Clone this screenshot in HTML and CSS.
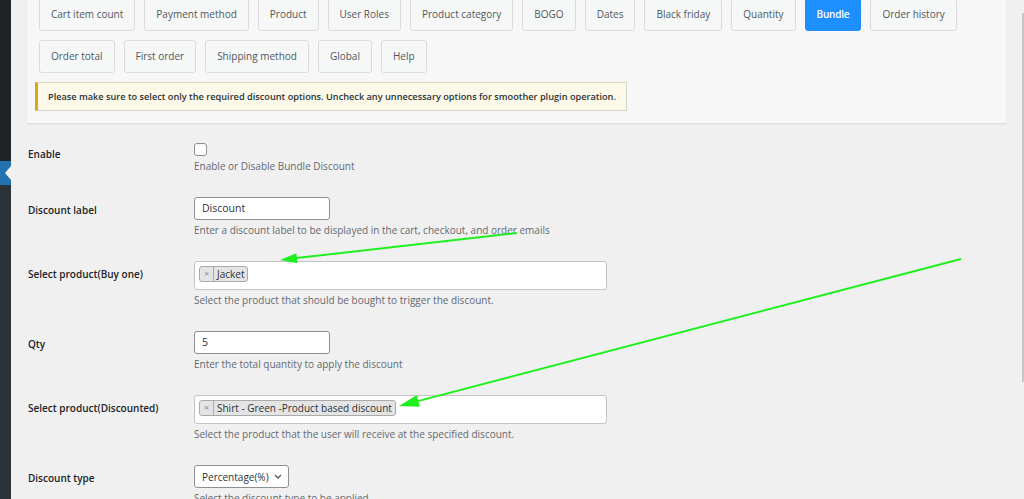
FILE: index.html
```html
<!DOCTYPE html>
<html lang="en">
<head>
  <meta charset="UTF-8">
  <meta name="viewport" content="width=device-width, initial-scale=1.0">
  <title>Bundle Discount</title>
  <link rel="stylesheet" href="styles.css">
</head>
<body>

<div class="layout">
  <aside class="adminmenu">
    <div class="menu-top"></div>
    <div class="menu-current"></div>
    <div class="menu-sub"></div>
  </aside>

  <main class="wrap">
    <div class="panel">
      <nav class="tabs">
        <a class="tab">Cart item count</a>
        <a class="tab">Payment method</a>
        <a class="tab">Product</a>
        <a class="tab">User Roles</a>
        <a class="tab">Product category</a>
        <a class="tab">BOGO</a>
        <a class="tab">Dates</a>
        <a class="tab">Black friday</a>
        <a class="tab">Quantity</a>
        <a class="tab active">Bundle</a>
        <a class="tab">Order history</a>
        <a class="tab">Order total</a>
        <a class="tab">First order</a>
        <a class="tab">Shipping method</a>
        <a class="tab">Global</a>
        <a class="tab">Help</a>
      </nav>
      <div class="notice">Please make sure to select only the required discount options. Uncheck any unnecessary options for smoother plugin operation.</div>
    </div>

    <div class="form-table">
      <div class="row">
        <label class="row-label">Enable</label>
        <div class="field">
          <span class="checkbox"></span>
          <p class="description">Enable or Disable Bundle Discount</p>
        </div>
      </div>

      <div class="row">
        <label class="row-label">Discount label</label>
        <div class="field">
          <div class="input short">Discount</div>
          <p class="description">Enter a discount label to be displayed in the cart, checkout, and order emails</p>
        </div>
      </div>

      <div class="row">
        <label class="row-label">Select product(Buy one)</label>
        <div class="field">
          <div class="multi">
            <span class="choice"><span class="choice-remove">×</span>Jacket</span>
          </div>
          <p class="description">Select the product that should be bought to trigger the discount.</p>
        </div>
      </div>

      <div class="row">
        <label class="row-label">Qty</label>
        <div class="field">
          <div class="input short">5</div>
          <p class="description">Enter the total quantity to apply the discount</p>
        </div>
      </div>

      <div class="row">
        <label class="row-label">Select product(Discounted)</label>
        <div class="field">
          <div class="multi">
            <span class="choice"><span class="choice-remove">×</span>Shirt - Green -Product based discount</span>
          </div>
          <p class="description">Select the product that the user will receive at the specified discount.</p>
        </div>
      </div>

      <div class="row">
        <label class="row-label">Discount type</label>
        <div class="field">
          <div class="select">Percentage(%)
            <svg class="chevron" width="8" height="5" viewBox="0 0 8 5"><path d="M1 1l3 3 3-3" fill="none" stroke="#50575e" stroke-width="1.3"/></svg>
          </div>
          <p class="description">Select the discount type to be applied</p>
        </div>
      </div>
    </div>
  </main>

  <div class="scrollbar"><div class="thumb"></div></div>

  <svg class="arrows" width="1024" height="499" viewBox="0 0 1024 499">
    <line x1="517" y1="233" x2="292" y2="258.6" stroke="#1ef01e" stroke-width="2"/>
    <polygon points="280,260 297.5,263.2 296.3,253.2" fill="#1ef01e"/>
    <line x1="961" y1="259" x2="412" y2="402.6" stroke="#1ef01e" stroke-width="2"/>
    <polygon points="399,406 419.8,406.7 416.8,395.1" fill="#1ef01e"/>
  </svg>
</div>

</body>
</html>
```

FILE: styles.css
```css
body {
  margin: 0;
  background-color: #f0f0f1;
  font-family: "Open Sans", "Noto Sans", sans-serif;
  color: #1d2327;
  overflow: hidden;
}

.layout {
  display: flex;
  height: 499px;
  position: relative;
}

.adminmenu {
  width: 11px;
  display: flex;
  flex-direction: column;
  flex-shrink: 0;
}

.menu-top {
  height: 161px;
  background-color: #1d2327;
}

.menu-current {
  height: 24px;
  background-color: #2271b1;
  position: relative;
}

.menu-current::after {
  content: "";
  position: absolute;
  right: 0;
  top: 5px;
  border-right: 6px solid #f0f0f1;
  border-top: 7px solid transparent;
  border-bottom: 7px solid transparent;
}

.menu-sub {
  flex: 1;
  background-color: #2c3338;
}

.wrap {
  flex: 1;
  padding: 0 16px;
  min-width: 0;
}

.panel {
  background-color: #f7f7f7;
  padding: 0 8px 12px;
  border-bottom: 1px solid #dcdcde;
  box-shadow: 0 1px 2px rgba(0, 0, 0, 0.04);
}

.tabs {
  display: flex;
  flex-wrap: wrap;
  gap: 9px;
  margin-top: -2px;
  padding-left: 4px;
}

.tab {
  height: 33px;
  box-sizing: border-box;
  padding: 0 11px;
  border: 1px solid #dcdcde;
  border-radius: 3px;
  background-color: #f6f7f7;
  color: #50575e;
  font-size: 10px;
  line-height: 31px;
  cursor: pointer;
}

.tab.active {
  background-color: #1e8fff;
  border-color: #1e8fff;
  color: #ffffff;
  font-weight: 600;
  letter-spacing: -0.2px;
}

.notice {
  width: fit-content;
  margin-top: 9px;
  height: 29px;
  box-sizing: border-box;
  padding: 0 10px;
  border: 1px solid #d6d3c4;
  border-left: 3px solid #dba617;
  background-color: #fcf9e8;
  font-size: 9.2px;
  font-weight: 600;
  line-height: 27px;
  color: #2c3338;
}

.form-table {
  padding: 17px 0 0 1px;
  display: flex;
  flex-direction: column;
  gap: 23px;
}

.row {
  display: grid;
  grid-template-columns: 166px 1fr;
}

.row-label {
  padding-top: 4px;
  font-size: 10px;
  font-weight: 600;
  line-height: 18px;
  color: #1d2327;
}

.field {
  display: flex;
  flex-direction: column;
  align-items: flex-start;
}

.checkbox {
  width: 11px;
  height: 11px;
  margin-top: 2px;
  border: 1px solid #8c8f94;
  border-radius: 3px;
  background-color: #ffffff;
}

.description {
  margin: 2px 0 0;
  font-size: 10px;
  line-height: 16px;
  color: #646970;
}

.input {
  height: 23px;
  box-sizing: border-box;
  border: 1px solid #8c8f94;
  border-radius: 3px;
  background-color: #ffffff;
  padding: 0 7px;
  font-size: 10.5px;
  line-height: 21px;
  color: #2c3338;
}

.input.short {
  width: 136px;
}

.multi {
  display: flex;
  align-items: flex-start;
  width: 413px;
  height: 29px;
  box-sizing: border-box;
  border: 1px solid #c3c4c7;
  border-radius: 3px;
  background-color: #ffffff;
  padding: 4px 0 0 4px;
}

.multi + .description {
  margin-top: 2px;
}

.choice {
  display: inline-flex;
  align-items: center;
  height: 16px;
  box-sizing: border-box;
  border: 1px solid #aaaaaa;
  border-radius: 3px;
  background-color: #e4e4e4;
  font-size: 10px;
  line-height: 14px;
  color: #2c3338;
  padding-right: 3px;
}

.choice-remove {
  display: inline-block;
  width: 13px;
  text-align: center;
  border-right: 1px solid #aaaaaa;
  margin-right: 3px;
  color: #8c8f94;
  font-size: 9px;
  line-height: 14px;
}

.select {
  display: inline-flex;
  align-items: center;
  gap: 5px;
  height: 23px;
  box-sizing: border-box;
  border: 1px solid #8c8f94;
  border-radius: 3px;
  background-color: #ffffff;
  padding: 0 6px 0 7px;
  font-size: 10px;
  color: #2c3338;
}

.scrollbar {
  width: 2px;
  flex-shrink: 0;
}

.thumb {
  margin-top: 13px;
  height: 369px;
  background-color: #c6c6c6;
}

.arrows {
  position: absolute;
  left: 0;
  top: 0;
  pointer-events: none;
}
```
